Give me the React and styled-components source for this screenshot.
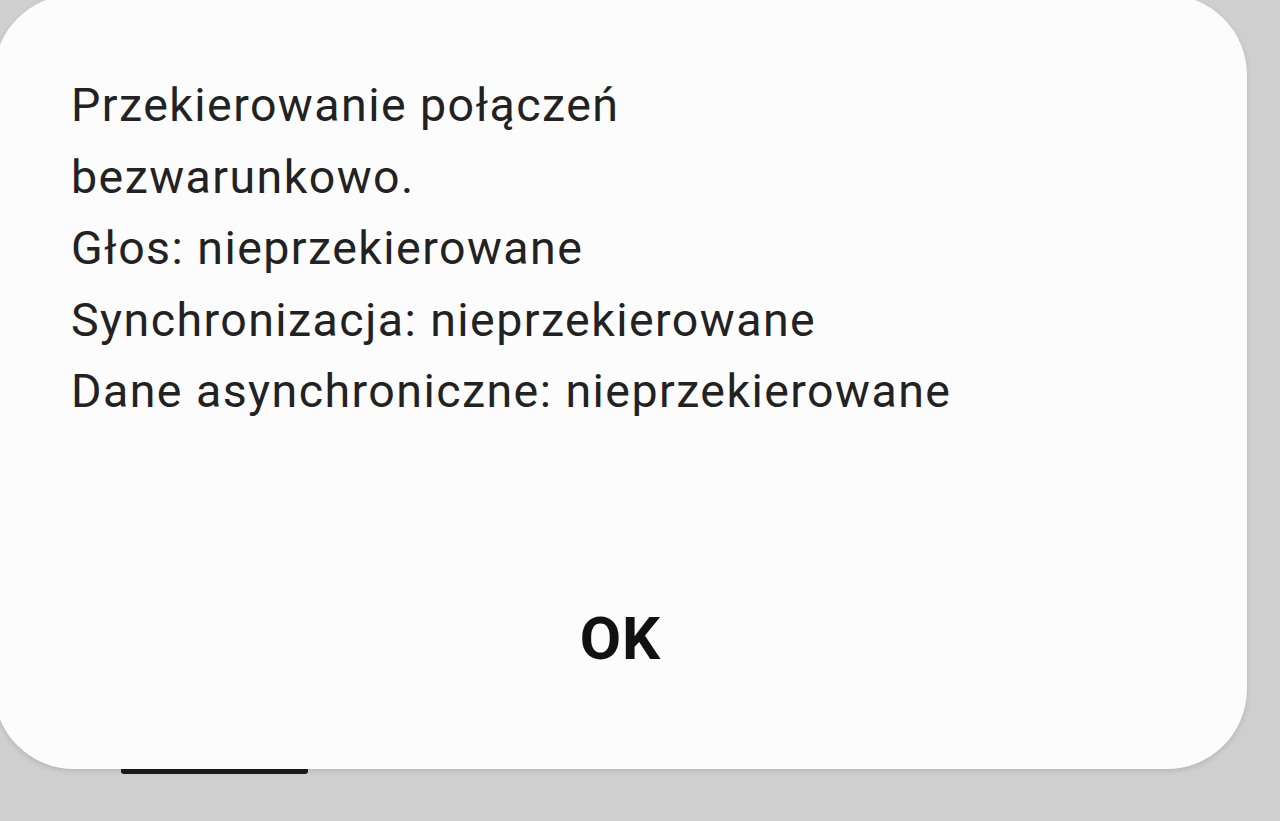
import React from 'react';
import styled, { createGlobalStyle } from 'styled-components';

const lines = [
  'Przekierowanie połączeń',
  'bezwarunkowo.',
  'Głos: nieprzekierowane',
  'Synchronizacja: nieprzekierowane',
  'Dane asynchroniczne: nieprzekierowane',
];

function App() {
  return (
    <>
      <GlobalStyle />
      <Screen>
        <Dialog>
          <Message>
            {lines.map((line) => (
              <Line key={line}>{line}</Line>
            ))}
          </Message>
          <OkButton>OK</OkButton>
        </Dialog>
        <HomeBar />
      </Screen>
    </>
  );
}

export default App;

const GlobalStyle = createGlobalStyle`
  html, body {
    margin: 0;
    padding: 0;
    background: #cfcfcf;
    overflow: hidden;
  }
`;

const Screen = styled.div`
  width: 1280px;
  height: 821px;
  overflow: hidden;
`;

const Dialog = styled.div`
  position: relative;
  z-index: 1;
  display: flex;
  flex-direction: column;
  box-sizing: border-box;
  width: 1253px;
  height: 774px;
  margin: -5px 0 0 -6px;
  padding: 75px 77px 100px;
  background: #fcfcfc;
  border-radius: 80px;
  box-shadow: 0 2px 5px rgba(0, 0, 0, 0.12);
`;

const Message = styled.div`
  display: flex;
  flex-direction: column;
`;

const Line = styled.p`
  margin: 0;
  font-family: Roboto, 'Noto Sans', sans-serif;
  font-size: 46.5px;
  line-height: 71.5px;
  letter-spacing: 1.45px;
  color: #222;
  white-space: nowrap;
`;

const OkButton = styled.button`
  align-self: center;
  margin-top: auto;
  padding: 0;
  border: none;
  background: none;
  font-family: Roboto, 'Noto Sans', sans-serif;
  font-size: 60px;
  font-weight: 700;
  line-height: 60px;
  letter-spacing: 1px;
  color: #111;
`;

const HomeBar = styled.div`
  width: 187px;
  height: 7px;
  margin: -2px 0 0 121px;
  border-radius: 3px;
  background: #1b1b1b;
`;
